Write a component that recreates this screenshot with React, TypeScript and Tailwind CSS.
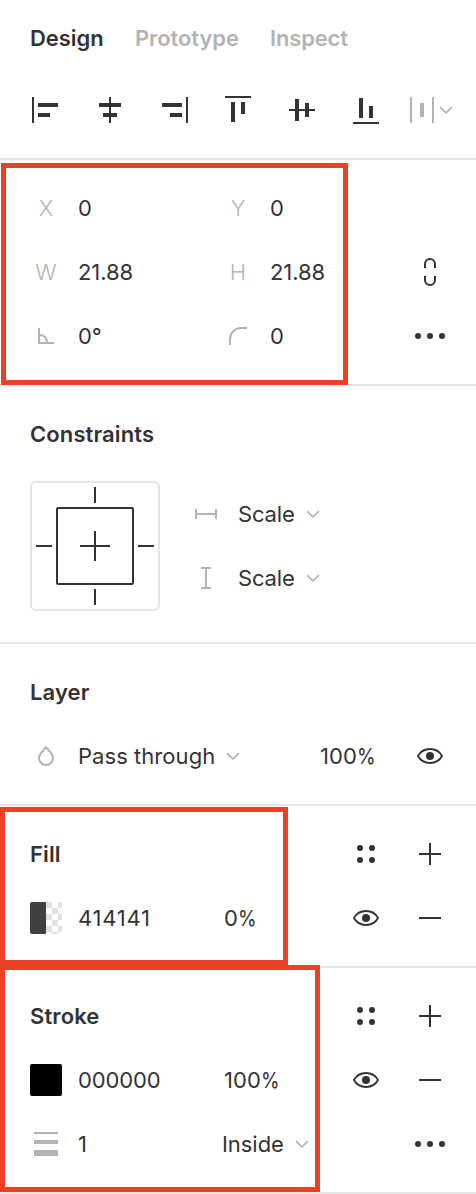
import type { ReactNode } from "react";

type IconProps = { children: ReactNode; className?: string };

function Icon({ children, className = "text-[#333]" }: IconProps) {
  return (
    <svg width="32" height="32" viewBox="0 0 32 32" fill="none" stroke="currentColor" strokeWidth="2" className={`shrink-0 ${className}`}>
      {children}
    </svg>
  );
}

/** Solid bars given as [x, y, width, height]. */
function Bars({ of, className }: { of: number[][]; className?: string }) {
  return (
    <Icon className={className}>
      {of.map(([x, y, w, h], i) => (
        <rect key={i} x={x} y={y} width={w} height={h} fill="currentColor" stroke="none" />
      ))}
    </Icon>
  );
}

function Dots({ at }: { at: number[][] }) {
  return (
    <Icon>
      {at.map(([x, y], i) => (
        <circle key={i} cx={x} cy={y} r="3" fill="currentColor" stroke="none" />
      ))}
    </Icon>
  );
}

const More = () => <Dots at={[[4, 16], [16, 16], [28, 16]]} />;
const Styles = () => <Dots at={[[10, 10], [22, 10], [10, 22], [22, 22]]} />;
const Plus = () => <Bars of={[[5, 15, 22, 2], [15, 5, 2, 22]]} />;
const Minus = () => <Bars of={[[5, 15, 22, 2]]} />;

function Eye() {
  return (
    <Icon>
      <path d="M4 16C6.500 11.300 10.500 9 16 9s9.500 2.300 12 7c-2.500 4.700-6.500 7-12 7s-9.500-2.300-12-7z" strokeWidth="1.8" />
      <circle cx="16" cy="16" r="4" fill="currentColor" stroke="none" />
    </Icon>
  );
}

function Chevron() {
  return (
    <svg width="14" height="10" viewBox="0 0 14 10" fill="none" stroke="#b3b3b3" strokeWidth="1.7" className="shrink-0">
      <path d="M1 2.200l6 5.700 6-5.700" />
    </svg>
  );
}

function Percent({ value, className = "" }: { value: number; className?: string }) {
  return (
    <span className={className}>
      {value}
      <span className="inline-block origin-left scale-x-[0.86]">%</span>
    </span>
  );
}

function Section({ children }: { children: ReactNode }) {
  return <section className="border-b-2 border-[#e5e5e5] py-4">{children}</section>;
}

function Row({ children }: { children: ReactNode }) {
  return <div className="flex h-16 items-center pl-[30px] pr-[30px]">{children}</div>;
}

function Title({ children }: { children: ReactNode }) {
  return <h2 className="grow font-semibold tracking-[0.11px]">{children}</h2>;
}

function Letter({ children }: { children: ReactNode }) {
  return <span className="w-8 shrink-0 text-center font-light text-[#b3b3b3]">{children}</span>;
}

function Field({ icon, value }: { icon: ReactNode; value: string }) {
  return (
    <div className="flex w-48 shrink-0 items-center gap-4">
      {icon}
      <span className="tracking-[-0.05px]">{value}</span>
    </div>
  );
}

export default function App() {
  return (
    <main className="relative h-[1194px] w-[476px] overflow-hidden bg-white font-['Inter',sans-serif] text-[22px] leading-8 tracking-[0.05px] text-[#333]">
      <header className="h-40 border-b-2 border-[#e5e5e5] pt-[22px]">
        <nav className="flex gap-[31px] pl-[30px] font-semibold text-[#b3b3b3]">
          <span className="w-[74px] tracking-[-0.05px] text-[#333]">Design</span>
          <span className="w-[104px] tracking-[-0.1px]">Prototype</span>
          <span className="tracking-[-0.15px]">Inspect</span>
        </nav>
        <div className="mt-10 flex gap-8 pl-[30px]">
          <Bars of={[[2, 3, 2, 26], [8, 9, 20, 4], [8, 19, 12, 4]]} />
          <Bars of={[[15, 3, 2, 26], [5, 9, 22, 4], [9, 19, 14, 4]]} />
          <Bars of={[[28, 3, 2, 26], [4, 9, 20, 4], [12, 19, 12, 4]]} />
          <Bars of={[[3, 2, 26, 2], [9, 8, 4, 20], [19, 8, 4, 12]]} />
          <Bars of={[[3, 15, 26, 2], [9, 5, 4, 22], [19, 9, 4, 14]]} />
          <Bars of={[[3, 28, 26, 2], [9, 4, 4, 20], [19, 12, 4, 12]]} />
          <div className="-ml-1 flex items-center">
            <svg width="29" height="32" viewBox="0 0 29 32" fill="#b3b3b3">
              <path d="M0 3h2v26H0zM10 9h4v14h-4zM22 3h2v26h-2z" />
            </svg>
            <Chevron />
          </div>
        </div>
      </header>

      <Section>
        <Row>
          <Field icon={<Letter>X</Letter>} value="0" />
          <Field icon={<Letter>Y</Letter>} value="0" />
        </Row>
        <Row>
          <Field icon={<Letter>W</Letter>} value="21.88" />
          <Field icon={<Letter>H</Letter>} value="21.88" />
          <Icon>
            <path d="M11 12V8a5 5 0 0 1 10 0v4M11 20v4a5 5 0 0 0 10 0v-4" />
          </Icon>
        </Row>
        <Row>
          <Field
            icon={
              <Icon className="text-[#b3b3b3]">
                <path d="M9 8v15h15M10 15a7 7 0 0 1 7 7" />
              </Icon>
            }
            value="0°"
          />
          <Field
            icon={
              <Icon className="text-[#b3b3b3]">
                <path d="M8 25v-6A11 11 0 0 1 19 8h6" />
              </Icon>
            }
            value="0"
          />
          <More />
        </Row>
      </Section>

      <section className="h-[258px] border-b-2 border-[#e5e5e5] pt-4">
        <Row>
          <Title>Constraints</Title>
        </Row>
        <div className="flex gap-[30px] pl-[30px] pt-[15px]">
          <svg width="130" height="130" viewBox="0 0 130 130" fill="none" stroke="#333" strokeWidth="2">
            <rect x="1" y="1" width="128" height="128" rx="5" stroke="#e5e5e5" />
            <rect x="27" y="27" width="76" height="76" rx="1" />
            <path d="M65 6v16M65 108v16M6 65h16M108 65h16M50 65h30M65 50v30" />
          </svg>
          <div className="mt-px flex flex-col">
            <div className="flex h-16 items-center">
              <Bars className="text-[#b3b3b3]" of={[[5, 11, 2, 10], [25, 11, 2, 10], [7, 15, 18, 2]]} />
              <span className="ml-4 w-[68px] tracking-[-0.15px]">Scale</span>
              <Chevron />
            </div>
            <div className="flex h-16 items-center">
              <Bars className="text-[#b3b3b3]" of={[[11, 5, 10, 2], [11, 25, 10, 2], [15, 7, 2, 18]]} />
              <span className="ml-4 w-[68px] tracking-[-0.15px]">Scale</span>
              <Chevron />
            </div>
          </div>
        </div>
      </section>

      <Section>
        <Row>
          <Title>Layer</Title>
        </Row>
        <Row>
          <Icon className="text-[#b3b3b3]">
            <path d="M16 7.400C13 10.800 9 13.800 9 18a7 7 0 0 0 14 0c0-4.200-4-7.200-7-10.600z" />
          </Icon>
          <div className="ml-4 flex w-[242px] items-center">
            <span className="w-[148px]">Pass through</span>
            <Chevron />
          </div>
          <Percent value={100} className="w-[94px]" />
          <Eye />
        </Row>
      </Section>

      <Section>
        <Row>
          <Title>Fill</Title>
          <div className="flex gap-8">
            <Styles />
            <Plus />
          </div>
        </Row>
        <Row>
          <div className="flex size-8 overflow-hidden rounded-xs">
            <div className="w-4 bg-[#414141]" />
            <div className="w-4 bg-[repeating-conic-gradient(#fff_0_25%,#e1e1e1_0_50%)] bg-size-[12px_12px]" />
          </div>
          <span className="ml-4 w-[146px] tracking-[0.75px]">414141</span>
          <Percent value={0} className="w-[126px] tracking-[-0.3px]" />
          <div className="flex gap-8">
            <Eye />
            <Minus />
          </div>
        </Row>
      </Section>

      <Section>
        <Row>
          <Title>Stroke</Title>
          <div className="flex gap-8">
            <Styles />
            <Plus />
          </div>
        </Row>
        <Row>
          <div className="size-8 rounded-xs bg-black" />
          <span className="ml-4 w-[146px] tracking-[-0.15px]">000000</span>
          <Percent value={100} className="w-[126px]" />
          <div className="flex gap-8">
            <Eye />
            <Minus />
          </div>
        </Row>
        <Row>
          <Bars className="text-[#b3b3b3]" of={[[4, 4, 24, 2], [4, 12, 24, 4], [4, 22, 24, 6]]} />
          <span className="ml-4 w-36">1</span>
          <div className="flex w-48 items-center">
            <span className="w-[73px] tracking-[-0.05px]">Inside</span>
            <Chevron />
          </div>
          <More />
        </Row>
      </Section>

      <div className="absolute left-px top-[163px] h-[222px] w-[347px] border-5 border-[#ec4027]" />
      <div className="absolute left-0 top-[807px] h-[158px] w-72 border-5 border-[#ec4027]" />
      <div className="absolute left-0 top-[965px] h-[227px] w-80 border-5 border-[#ec4027]" />
    </main>
  );
}
